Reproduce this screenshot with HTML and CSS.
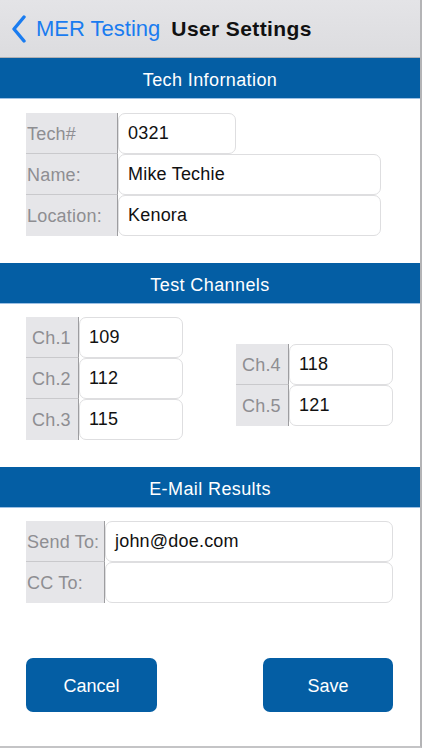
FILE: index.html
```html
<!DOCTYPE html>
<html>
<head>
<meta charset="utf-8">
<link rel="stylesheet" href="styles.css">
</head>
<body>
<div class="frame">
  <div class="nav">
    <div class="back">
      <svg class="chev" width="16" height="28" viewBox="0 0 16 28"><path d="M13 2 L3 14 L13 26" fill="none" stroke="#1a7cf0" stroke-width="3.4" stroke-linecap="round" stroke-linejoin="round"/></svg>
      <span class="back-text">MER Testing</span>
    </div>
    <span class="title">User Settings</span>
  </div>

  <div class="band">Tech Infornation</div>
  <div class="section tech">
    <div class="row"><div class="lbl w92">Tech#</div><div class="field w118">0321</div></div>
    <div class="row"><div class="lbl w92">Name:</div><div class="field w263">Mike Techie</div></div>
    <div class="row last"><div class="lbl w92">Location:</div><div class="field w263">Kenora</div></div>
  </div>

  <div class="band">Test Channels</div>
  <div class="section channels">
    <div class="col">
      <div class="row"><div class="lbl w53">Ch.1</div><div class="field w104">109</div></div>
      <div class="row"><div class="lbl w53">Ch.2</div><div class="field w104">112</div></div>
      <div class="row last"><div class="lbl w53">Ch.3</div><div class="field w104">115</div></div>
    </div>
    <div class="col right">
      <div class="row"><div class="lbl w53">Ch.4</div><div class="field w104">118</div></div>
      <div class="row last"><div class="lbl w53">Ch.5</div><div class="field w104">121</div></div>
    </div>
  </div>

  <div class="band">E-Mail Results</div>
  <div class="section email">
    <div class="row"><div class="lbl w79">Send To:</div><div class="field w288">john@doe.com</div></div>
    <div class="row last"><div class="lbl w79">CC To:</div><div class="field w288"></div></div>
  </div>

  <div class="buttons">
    <div class="btn cancel">Cancel</div>
    <div class="btn save">Save</div>
  </div>
</div>
</body>
</html>
```

FILE: styles.css
```css
html, body {
  margin: 0;
  padding: 0;
  background: #ffffff;
}
body {
  font-family: "Liberation Sans", Arial, sans-serif;
}
.frame {
  width: 420px;
  height: 746px;
  border-right: 2px solid #b4b4b6;
  border-bottom: 2px solid #c4c4c6;
  background: #ffffff;
  box-sizing: content-box;
}
.nav {
  background: linear-gradient(#e4e4e7, #dcdcdf);
  border-bottom: 1px solid #b0b0b3;
  display: flex;
  align-items: center;
  box-sizing: border-box;
  height: 58px;
}
.back {
  display: flex;
  align-items: center;
  margin-left: 11px;
}
.chev {
  display: block;
  margin-top: 1px;
}
.back-text {
  color: #1a7cf0;
  font-size: 22px;
  margin-left: 9px;
}
.title {
  font-size: 21px;
  font-weight: bold;
  color: #111111;
  margin-left: 11px;
  letter-spacing: 0.4px;
}
.band {
  height: 41px;
  background: #045ea4;
  color: #ffffff;
  font-size: 18px;
  letter-spacing: 0.4px;
  display: flex;
  align-items: center;
  justify-content: center;
  border-bottom: 1px solid #9cc0e4;
  box-sizing: border-box;
  padding-top: 4px;
}
.section {
  padding-left: 26px;
}
.tech {
  padding-top: 14px;
  padding-bottom: 27px;
}
.channels {
  padding-top: 13px;
  padding-bottom: 27px;
  display: flex;
  gap: 53px;
  align-items: flex-start;
}
.channels .right {
  margin-top: 27px;
}
.email {
  padding-top: 13px;
}
.row {
  display: flex;
  height: 41px;
}
.lbl {
  background: #e6e6e9;
  border-right: 1px solid #9d9da0;
  border-bottom: 1px solid #c9c9cc;
  box-sizing: border-box;
  color: #8e8e92;
  font-size: 18px;
  letter-spacing: 0.2px;
  display: flex;
  align-items: center;
  padding-left: 1px;
  padding-top: 2px;
}
.row.last .lbl {
  border-bottom: none;
}
.w92 { width: 92px; }
.w53 { width: 53px; padding-left: 6px; }
.w79 { width: 79px; }
.field {
  background: #ffffff;
  border: 1px solid #dedee0;
  border-radius: 7px;
  box-sizing: border-box;
  font-size: 18px;
  letter-spacing: 0.2px;
  color: #111111;
  display: flex;
  align-items: center;
  padding-left: 9px;
  padding-bottom: 1px;
}
.w118 { width: 118px; }
.w263 { width: 263px; }
.w104 { width: 104px; }
.w288 { width: 288px; }
.buttons {
  display: flex;
  justify-content: space-between;
  padding: 0 27px 0 26px;
  margin-top: 55px;
}
.btn {
  width: 131px;
  height: 54px;
  background: #045ea4;
  border-radius: 7px;
  color: #ffffff;
  font-size: 18px;
  display: flex;
  align-items: center;
  justify-content: center;
  padding-top: 2px;
  box-sizing: border-box;
}
.save {
  width: 130px;
}
```
